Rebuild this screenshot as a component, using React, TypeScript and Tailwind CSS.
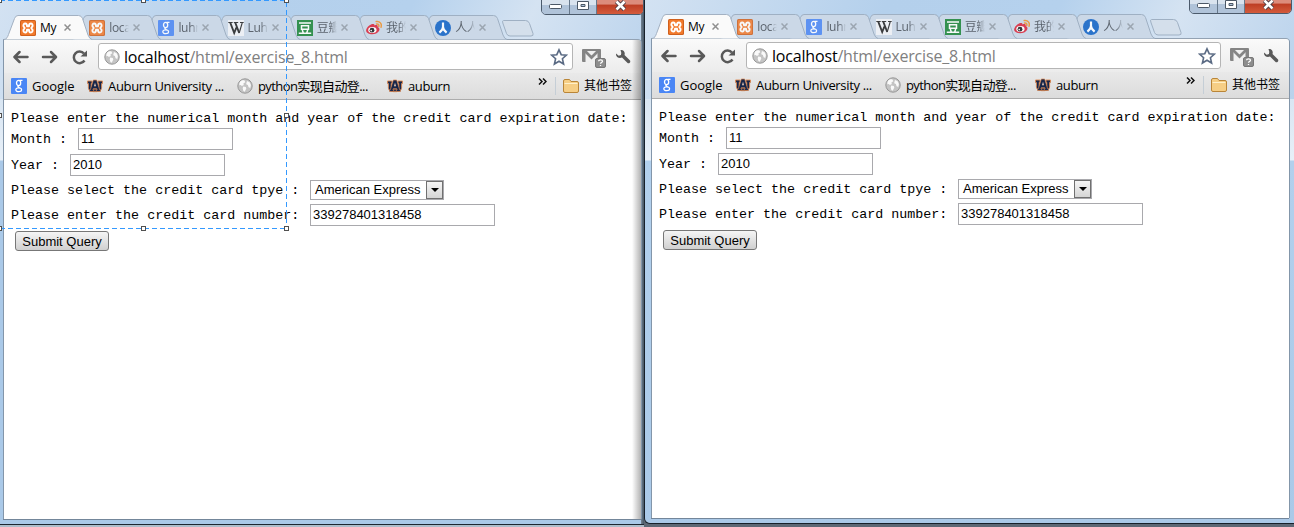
import React from "react";

type IconName = "xampp" | "g" | "w" | "dou" | "weibo" | "ren" | "globe" | "au";

function Favicon({ name }: { name: IconName }) {
  const c = "h-4 w-4 shrink-0";
  switch (name) {
    case "xampp":
      return (
        <svg className={c} viewBox="0 0 16 16">
          <rect width="16" height="16" rx="1.5" fill="#d0601c" />
          <rect x="1" y="1" width="14" height="14" rx="1" fill="#f27a2c" />
          <path d="M5.3 3.5C7 3.500 7 5 7 6.300H9C9 5 9 3.500 10.700 3.500S12.800 5 12.500 6.200L11.300 8l1.200 1.800c.3 1.200-.1 2.700-1.800 2.700S9 11 9 9.700H7C7 11 7 12.500 5.300 12.500S3.200 11 3.500 9.800L4.700 8 3.500 6.200C3.200 5 3.600 3.500 5.300 3.500z" fill="none" stroke="#fff" strokeWidth="1.900" strokeLinejoin="round" />
        </svg>
      );
    case "g":
      return (
        <svg className={c} viewBox="0 0 16 16">
          <rect width="16" height="16" rx="1" fill="#4a86f5" />
          <ellipse cx="7.6" cy="5" rx="2.1" ry="2.6" fill="none" stroke="#fff" strokeWidth="1.3" />
          <path d="M8.500 2.300h3M8 7.500c-2 .8-1 1.500.6 2.300" fill="none" stroke="#fff" strokeWidth="1.200" />
          <ellipse cx="7.700" cy="11.800" rx="2.900" ry="1.900" fill="none" stroke="#fff" strokeWidth="1.200" />
        </svg>
      );
    case "w":
      return (
        <svg className={c} viewBox="0 0 16 16">
          <rect width="16" height="16" fill="#f2f4f7" />
          <path d="M.3 2.500h4.400M5.800 2.500h4.400M12 2.500h3.700" stroke="#222" strokeWidth="1" />
          <path d="M2.200 2.500l4 10.500 2.200-5.500M7.200 2.500L11.200 13" fill="none" stroke="#222" strokeWidth="1.900" />
          <path d="M11.200 13L14.300 2.500" fill="none" stroke="#222" strokeWidth="1.100" />
        </svg>
      );
    case "dou":
      return (
        <svg className={c} viewBox="0 0 16 16">
          <rect width="16" height="16" fill="#1a8536" />
          <path d="M2 3h12M4.500 5.700h7v3.600h-7zM5.300 10l1 3M10.700 10l-1 3M1.800 13.300h12.400" fill="none" stroke="#fff" strokeWidth="1.500" />
        </svg>
      );
    case "weibo":
      return (
        <svg className={c} viewBox="0 0 16 16">
          <path d="M5.500 4.200c1.800-.6 3.200-.2 3 1.200 2-.7 3.600-.3 3.200 1.500 3 1.300 2 5-1.500 6.500-4 1.700-9.800.6-10.100-2.700C0 8.300 3 5 5.500 4.200z" fill="#dc2438" />
          <ellipse cx="6.400" cy="10" rx="4.200" ry="2.900" fill="#fff" />
          <circle cx="6" cy="10.200" r="2.400" fill="#1c1c1c" />
          <circle cx="5.200" cy="10.600" r=".8" fill="#fff" />
          <path d="M10.500 4c1.800-.3 2.700.8 2.300 2.400M10.200 1.600c3.600-.7 6 2.200 4.800 5.600" fill="none" stroke="#f09028" strokeWidth="1.500" strokeLinecap="round" />
        </svg>
      );
    case "ren":
      return (
        <svg className={c} viewBox="0 0 16 16">
          <circle cx="8" cy="8" r="8" fill="#0f62c6" />
          <path d="M8 2.500v4.500c0 2.300-1.600 4-3.600 5.600M8 7c0 2.300 1.600 4 3.600 5.600" fill="none" stroke="#fff" strokeWidth="2.200" />
        </svg>
      );
    case "globe":
      return (
        <svg className={c} viewBox="0 0 16 16">
          <circle cx="8" cy="8" r="7.200" fill="#c4c4c4" stroke="#979797" />
          <path d="M3 3.800c1.600-1.500 3.200-1.600 4.500-1.300l.8 1.700-1.900 1.200.4 1.600-2 .9L3.800 7l-1.500.3C2.300 5.800 2.500 4.700 3 3.800zM6.300 8.500l2.500.6.500 1.500-1.600 3.200-1.300-.8-.7-2.800zM10 3l2.600 1.300 1.300 2.600-.6 3-1.700-.6-.7-2.200-1.700-.8.300-1.500z" fill="#fafafa" />
        </svg>
      );
    case "au":
      return (
        <svg className={c} viewBox="0 0 16 16">
          <path d="M.5 3h4.500v2.400H4.200V9c0 1.500.8 2 3.800 2s3.800-.5 3.800-2V5.400H11V3h4.500v2.400h-.9V9.500c0 2.800-2 4.200-6.600 4.200S1.400 12.300 1.400 9.500V5.400H.5z" fill="#17264a" stroke="#dd8850" strokeWidth=".9" />
          <path d="M6.300 2h3.400l3 9.800h.8v1.700H9.300v-1.700h.8l-.3-1H6.200l-.3 1h.8v1.700H2.500v-1.700h.8z" fill="#17264a" stroke="#dd8850" strokeWidth=".7" />
          <path d="M8 4.700l1 3.600H7z" fill="#f3d3bd" />
        </svg>
      );
  }
}

const tabs: { icon: IconName; label: string }[] = [
  { icon: "xampp", label: "My" },
  { icon: "xampp", label: "loca" },
  { icon: "g", label: "luhn" },
  { icon: "w", label: "Luh" },
  { icon: "dou", label: "豆瓣" },
  { icon: "weibo", label: "我的" },
  { icon: "ren", label: "人人" },
];

const stack = ["z-[7]", "z-[6]", "z-[5]", "z-[4]", "z-[3]", "z-[2]", "z-[1]"];

function Tab({ icon, label, index }: { icon: IconName; label: string; index: number }) {
  const active = index === 0;
  return (
    <div className={`relative h-[25px] w-[69.2px] shrink-0 ${stack[index]}`}>
      <svg className="absolute -left-[3px] top-0 h-[25px] w-[90px]" viewBox="0 0 90 25">
        <path
          d="M0 24.500C3 24 3.500 22 4.500 19.500L10.500 3.500Q11.500.5 14 .5H74.500Q77.500.5 78.500 3.500L84 20Q85.500 24 88 24.500"
          fill={active ? "#fafafa" : "#cbd8e7"}
          stroke={active ? "#a3b1c2" : "#9fb0c3"}
        />
      </svg>
      <div className="relative flex h-[25px] items-center pl-[13px]">
        <span className={active ? "" : "opacity-85"}><Favicon name={icon} /></span>
        <span className={`ml-1 w-[20px] overflow-hidden whitespace-nowrap text-[12px] leading-4 tracking-[-0.3px] ${active ? "text-black" : "text-[#5c646e] [mask-image:linear-gradient(to_right,black_65%,transparent)]"}`}>{label}</span>
        <svg className="ml-[4px] h-[7px] w-[7px] shrink-0" viewBox="0 0 7 7">
          <path d="M.5 .5l6 6M6.500 .5l-6 6" stroke={active ? "#8f8f8f" : "#9ba5b0"} strokeWidth="1.500" />
        </svg>
      </div>
    </div>
  );
}

function Caption() {
  return (
    <div className="absolute left-[541px] top-[-5px] flex h-[20px] w-[103px] overflow-hidden rounded-b-[5px] border border-[#4b5a6b] bg-[#b9cbe0]">
      <div className="flex w-[28px] items-center justify-center border-r border-[#66788b] bg-linear-to-b from-[#d9e3ee] from-50% to-[#b0c3d9] to-50%">
        <svg className="mt-[2px] h-[5px] w-[13px]" viewBox="0 0 13 5"><rect x=".5" y=".5" width="12" height="4" rx="1" fill="#fff" stroke="#4c5866" /></svg>
      </div>
      <div className="flex w-[27px] items-center justify-center border-r border-[#66788b] bg-linear-to-b from-[#d9e3ee] from-50% to-[#b0c3d9] to-50%">
        <svg className="h-[9px] w-[12px]" viewBox="0 0 12 9"><path d="M.5.5h11v8H.5zM4 3.500h4v2H4z" fill="#fff" fillRule="evenodd" stroke="#4c5866" /></svg>
      </div>
      <div className="flex flex-1 items-center justify-center bg-linear-to-b from-[#dc8c7c] from-45% via-[#bd3d24] via-50% to-[#d45b3c]">
        <svg className="h-[11px] w-[13px]" viewBox="0 0 13 11"><path d="M2.500 1.500l8 8M10.500 1.500l-8 8" stroke="#4d3d45" strokeWidth="4.500" /><path d="M2.500 1.500l8 8M10.500 1.500l-8 8" stroke="#fff" strokeWidth="2.600" /></svg>
      </div>
    </div>
  );
}

function Toolbar() {
  return (
    <div className="flex h-[33px] shrink-0 items-center bg-linear-to-b from-[#fafafa] to-[#ececec]">
      <svg className="ml-[9px] h-[16px] w-[75px] shrink-0" viewBox="0 0 75 16" fill="none" stroke="#595959" strokeWidth="2.500" strokeLinecap="round" strokeLinejoin="round">
        <path d="M6.500 3L1.500 8l5 5M2 8h12.500" />
        <path d="M38 3l5 5-5 5M42.500 8H30" />
        <path d="M71 4.500A5.800 5.800 0 1 0 71.500 11.500" strokeLinecap="butt" />
        <path d="M67.500 7.500H74V1.500z" fill="#595959" stroke="none" />
      </svg>
      <div className="ml-[10px] flex h-[27px] w-[475px] shrink-0 items-center rounded-[3px] border border-[#b5b5b5] bg-white pl-[5px] pr-[4px]">
        <Favicon name="globe" />
        <span className="ml-[4px] flex-1 whitespace-nowrap text-[16px] leading-5 tracking-[-0.18px] text-[#808080]"><span className="text-black">localhost</span>/html/exercise_8.html</span>
        <svg className="h-[18px] w-[18px]" viewBox="0 0 18 18"><path d="M9 1.800l2.200 4.900 5.200.5-4 3.500 1.200 5.300L9 13.200 4.400 16l1.200-5.300-4-3.500 5.200-.5z" fill="#fff" stroke="#5b6b84" strokeWidth="1.600" /></svg>
      </div>
      <svg className="ml-[9px] h-[22px] w-[24px] shrink-0" viewBox="0 0 24 22">
        <rect y="3" width="19" height="13" rx="1" fill="#858585" />
        <path d="M3.500 16V5h12v11z" fill="#f0f0f0" />
        <path d="M2 4l7.500 7.500L17 4" fill="none" stroke="#858585" strokeWidth="2.700" />
        <rect x="13.500" y="12.500" width="10" height="9" rx="1.500" fill="#8d8d8d" stroke="#777" />
        <path d="M16.500 15.300c.2-2 4-2 4 0 0 1.300-2 1.200-2 2.500M18.500 18.900v1.200" fill="none" stroke="#fff" strokeWidth="1.300" />
      </svg>
      <svg className="ml-[9px] h-[16px] w-[16px] shrink-0" viewBox="0 0 16 16">
        <path d="M5.500 1C8.500.5 10.500 3 9.500 6l5.300 5.200c1.500 1.600-.8 4.200-2.500 2.600L7 8.600C4 10 .5 8 1 4.500l2.700 2.200 2.200-.6.400-2.200z" fill="#595959" />
      </svg>
    </div>
  );
}

function Bookmarks() {
  return (
    <div className="flex h-[27px] shrink-0 items-center whitespace-nowrap border-b border-[#acacac] bg-linear-to-b from-[#e9e9e9] to-[#dcdcdc] pb-px pl-[7px] text-[13px] leading-4 text-black">
      <div className="flex w-[76px] items-center gap-[5px]"><Favicon name="g" /><span className="tracking-[-0.05px]">Google</span></div>
      <div className="flex w-[150px] items-center gap-[5px]"><Favicon name="au" /><span className="tracking-[-0.33px]">Auburn University ...</span></div>
      <div className="flex w-[150px] items-center gap-[5px]"><Favicon name="globe" /><span className="tracking-[-0.6px]">python实现自动登...</span></div>
      <div className="flex w-[151px] items-center gap-[5px]"><Favicon name="au" /><span className="tracking-[-0.4px]">auburn</span></div>
      <svg className="mb-[8px] h-[7px] w-[9px]" viewBox="0 0 9 7"><path d="M1 .5l3 3-3 3M5 .5l3 3-3 3" fill="none" stroke="#111" strokeWidth="1.500" /></svg>
      <div className="ml-[8px] h-[18px] w-px bg-[#c5ced6]" />
      <svg className="ml-[7px] h-[14px] w-[16px]" viewBox="0 0 16 14"><path d="M.5 12V2Q.5.500 2 .5h4.500L8 2.500h6Q15.500 2.500 15.500 4v8q0 1.500-1.500 1.500H2Q.5 13.500.5 12z" fill="#f6ce85" stroke="#b98538" /><path d="M1.500 4.500h13" stroke="#fff0c9" /></svg>
      <span className="ml-[5px] text-[12px]">其他书签</span>
    </div>
  );
}

const field = "border border-[#a9a9ad] bg-white font-['Liberation_Sans',sans-serif] text-[13px] leading-[20px] pl-[2px] h-[22px]";

function Page() {
  return (
    <div className="flex min-h-0 flex-1 flex-col whitespace-pre bg-white pl-[7px] font-['Liberation_Mono',monospace] text-[13.35px] leading-4 text-black">
      <div className="mt-[11px] h-[17px]">Please enter the numerical month and year of the credit card expiration date:</div>
      <div className="flex h-[24px] items-start"><span className="mt-[4px] w-[67px]">Month :</span><div className={`${field} w-[155px]`}>11</div></div>
      <div className="mt-[2px] flex h-[24px] items-start"><span className="mt-[4px] w-[59px]">Year :</span><div className={`${field} w-[155px]`}>2010</div></div>
      <div className="flex h-[24px] items-start">
        <span className="mt-[5px] w-[299px]">Please select the credit card tpye :</span>
        <div className="mt-[2px] flex h-[20px] w-[134px] items-center justify-between border border-[#a9a9ad] pl-[4px] font-['Liberation_Sans',sans-serif] text-[13px]">
          <span>American Express</span>
          <div className="flex h-[18px] w-[17px] items-center justify-center border border-[#707070] bg-linear-to-b from-[#f5f5f5] to-[#d5d5d5]">
            <svg className="h-[4px] w-[8px]" viewBox="0 0 8 4"><path d="M0 0h8L4 4z" fill="#000" /></svg>
          </div>
        </div>
      </div>
      <div className="mt-[2px] flex h-[25px] items-start"><span className="mt-[4px] w-[299px]">Please enter the credit card number:</span><div className={`${field} w-[185px]`}>339278401318458</div></div>
      <div className="ml-[4px] mt-[2px] flex h-[20px] w-[94px] shrink-0 items-center justify-center rounded-[3px] border border-[#777] bg-linear-to-b from-[#f5f5f5] to-[#d0d0d0] pt-px font-['Liberation_Sans',sans-serif] text-[13px]">Submit Query</div>
    </div>
  );
}

function BrowserWindow({ rear = false }: { rear?: boolean }) {
  return (
    <div className="relative flex h-full w-[638px] shrink-0 flex-col">
      <div className={`relative flex shrink-0 items-end pl-[4px] ${rear ? "h-[40px]" : "h-[39px]"}`}>
        {tabs.map((t, i) => <Tab key={i} {...t} index={i} />)}
        <svg className="mb-[3px] ml-[11px] h-[17px] w-[33px]" viewBox="0 0 33 17"><path d="M1.500.5h22q3 0 4 3l3.500 10q.8 2.500-2 2.500H8q-2.500 0-3.500-2.500L.8 3Q0 .5 1.500.5z" fill="#d4dfeb" stroke="#9fb0c3" /></svg>
      </div>
      <div className="relative flex min-h-0 flex-1 flex-col overflow-hidden rounded-tr-[3px] border-l border-[#8396aa] shadow-[0_-1px_0_#93a2b3,1px_0_0_#8396aa,0_1px_0_#73869a]">
        <Toolbar />
        <Bookmarks />
        <Page />
        {rear && <div className="absolute inset-y-0 right-0 w-[9px] bg-linear-to-r from-transparent to-black/30" />}
      </div>
    </div>
  );
}

const handles = ["left-[-3px] top-[-2px]", "left-[141px] top-[-2px]", "left-[284px] top-[-2px]", "left-[-3px] top-[113px]", "left-[284px] top-[113px]", "left-[-3px] top-[226px]", "left-[141px] top-[226px]", "left-[284px] top-[226px]"];

export default function App() {
  return (
    <div className="relative flex h-[527px] w-[1294px] overflow-hidden bg-[#5d6875] font-['Open_Sans','Noto_Sans_CJK_SC',sans-serif]">
      <div className="relative flex h-[527px] w-[644px] shrink-0 bg-[#aebdca]">
        <div className="flex h-[525px] w-[644px] border-b border-[#1d2630] bg-[linear-gradient(115deg,#d3e2f2_0%,#b4d0ec_35%,#b5d1ed_60%,#d5e3f2_78%,#b9d2ec_100%)] bg-[length:100%_100px] bg-no-repeat">
          <div className="flex h-[524px] w-[644px] bg-[linear-gradient(transparent_0,transparent_99px,#d9e6f3_99px,#e8f0f8_160px,#aac9e8_161px,#aac9e8_100%)] pb-[5px] pl-[3px]">
            <BrowserWindow rear />
            <div className="-mb-[5px] w-[3px] bg-linear-to-r from-[#748493] to-[#465665]" />
          </div>
        </div>
        <Caption />
      </div>
      <div className="relative h-[524px] w-[650px] shrink-0 rounded-bl-[6px] border-b border-l border-[#17202a] bg-[linear-gradient(115deg,#d3e2f2_0%,#b4d0ec_35%,#b5d1ed_60%,#d5e3f2_78%,#b9d2ec_100%)] bg-[length:100%_100px] bg-no-repeat">
        <div className="flex h-[523px] rounded-bl-[5px] bg-[linear-gradient(transparent_0,transparent_99px,#d9e6f3_99px,#e8f0f8_160px,#b2d0ed_161px,#aac9e8_100%)] pb-[5px] pl-[6px]">
          <BrowserWindow />
        </div>
        <div className="absolute left-[3px] top-[-1px]"><Caption /></div>
      </div>
      <div className="pointer-events-none absolute left-0 top-0 z-20 h-[230px] w-[290px]">
        <svg className="absolute inset-0 h-[230px] w-[290px]" viewBox="0 0 290 230" fill="none" stroke="#3399ff" strokeDasharray="5 3"><path d="M0 .5H286.500V228.500M0 228.500H286" /></svg>
        {handles.map((h) => <div key={h} className={`absolute h-[5px] w-[5px] border border-[#505050] bg-white ${h}`} />)}
      </div>
    </div>
  );
}
